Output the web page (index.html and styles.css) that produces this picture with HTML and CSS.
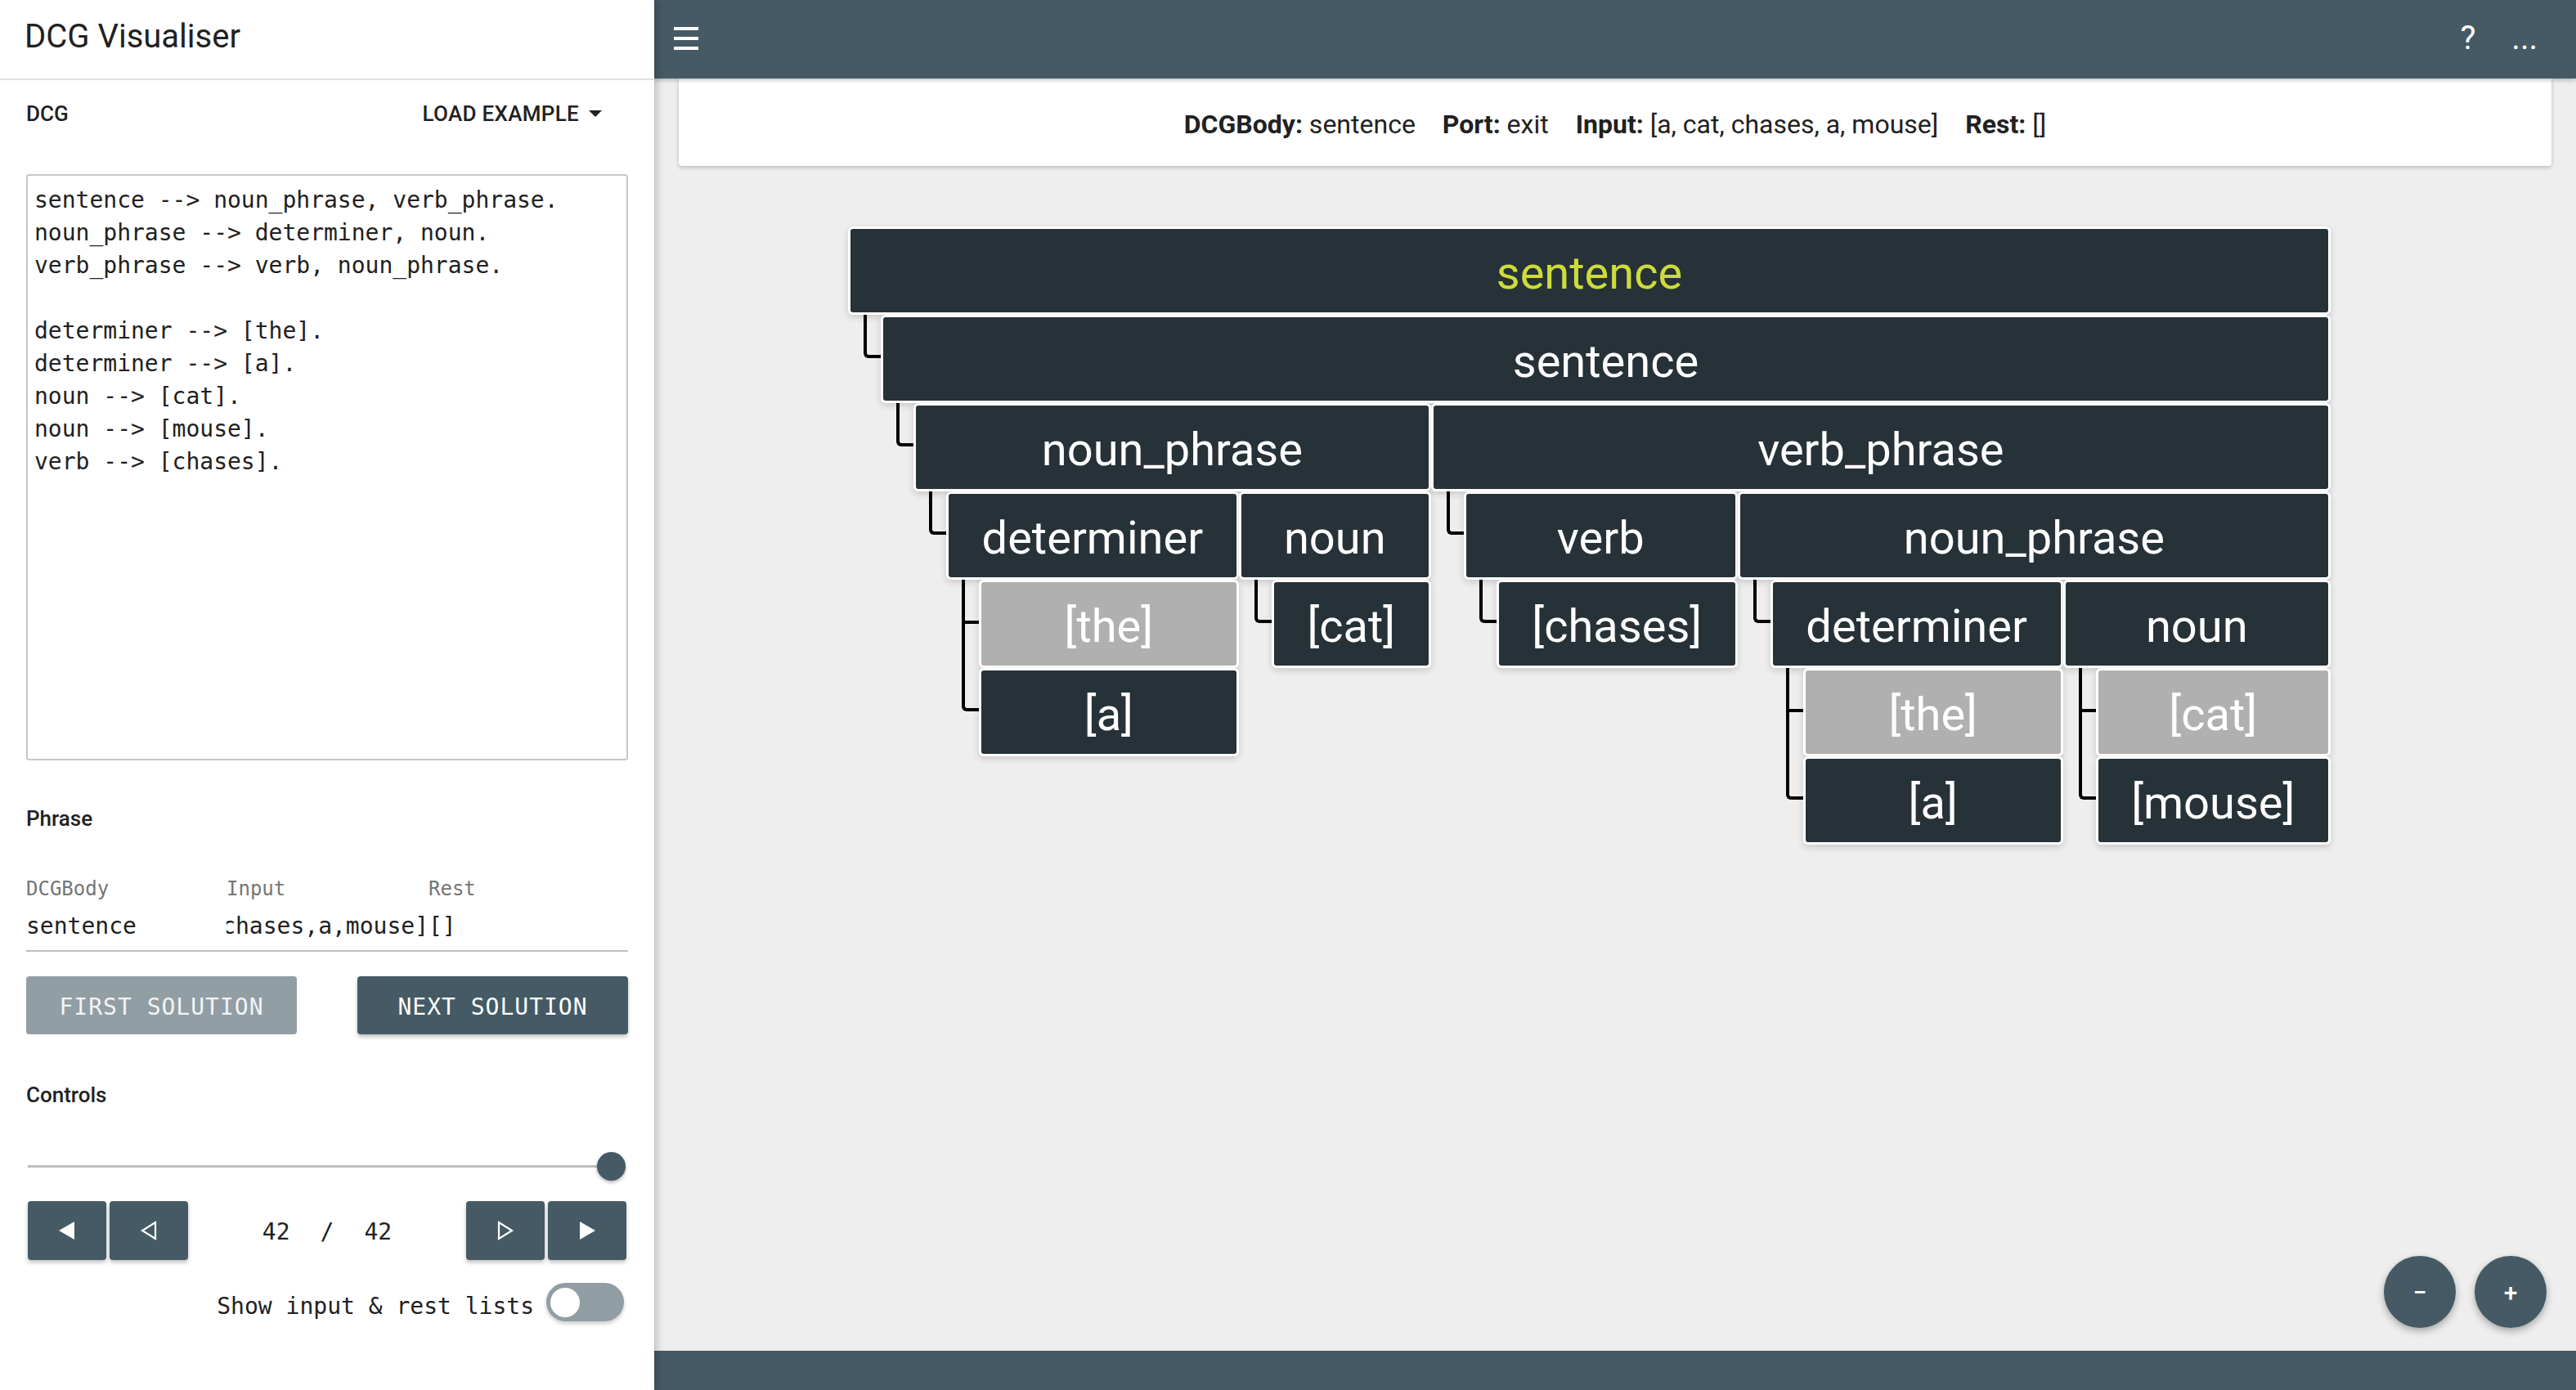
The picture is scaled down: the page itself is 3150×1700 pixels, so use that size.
FILE: index.html
```html
<!DOCTYPE html>
<html lang="en">
<head>
<meta charset="utf-8">
<title>DCG Visualiser</title>
<link rel="stylesheet" href="styles.css">
</head>
<body>
<div class="app">
  <aside class="sidebar">
    <div class="brand">DCG Visualiser</div>
    <div class="panel">
      <div class="sec-head">
        <span class="sec-title">DCG</span>
        <span class="load">LOAD EXAMPLE<svg class="caret" width="16" height="8" viewBox="0 0 16 8"><polygon points="0,0 16,0 8,8" fill="#212121"/></svg></span>
      </div>
      <div class="editor">sentence --&gt; noun_phrase, verb_phrase.
noun_phrase --&gt; determiner, noun.
verb_phrase --&gt; verb, noun_phrase.

determiner --&gt; [the].
determiner --&gt; [a].
noun --&gt; [cat].
noun --&gt; [mouse].
verb --&gt; [chases].</div>
      <div class="sec-title phrase-title">Phrase</div>
      <div class="ptable">
        <div class="prow phead"><span class="c1">DCGBody</span><span class="c2">Input</span><span class="c3">Rest</span></div>
        <div class="prow pvals"><span class="c1">sentence</span><span class="c2 clip"><span>[a,cat,chases,a,mouse]</span></span><span class="c3">[]</span></div>
      </div>
      <div class="sol-row">
        <button class="btn btn-off">FIRST SOLUTION</button>
        <button class="btn">NEXT SOLUTION</button>
      </div>
      <div class="sec-title controls-title">Controls</div>
      <div class="slider"><div class="track"></div><div class="thumb"></div></div>
      <div class="nav">
        <div class="nav-group">
          <button class="nbtn"><svg width="22" height="24" viewBox="0 0 22 24"><polygon points="20,1 20,23 1,12" fill="#fff"/></svg></button>
          <button class="nbtn"><svg width="22" height="24" viewBox="0 0 22 24"><polygon points="19,2 19,22 3,12" fill="none" stroke="#fff" stroke-width="2.2" stroke-linejoin="miter"/></svg></button>
        </div>
        <div class="counter"><span>42</span><span>/</span><span>42</span></div>
        <div class="nav-group">
          <button class="nbtn"><svg width="22" height="24" viewBox="0 0 22 24"><polygon points="3,2 3,22 19,12" fill="none" stroke="#fff" stroke-width="2.2" stroke-linejoin="miter"/></svg></button>
          <button class="nbtn"><svg width="22" height="24" viewBox="0 0 22 24"><polygon points="2,1 2,23 21,12" fill="#fff"/></svg></button>
        </div>
      </div>
      <div class="toggle-row">
        <span class="toggle-label">Show input &amp; rest lists</span>
        <span class="toggle"><span class="knob"></span></span>
      </div>
    </div>
  </aside>

  <main class="main">
    <header class="topbar">
      <svg class="menu" width="30" height="28" viewBox="0 0 30 28"><rect x="0" y="0" width="30" height="4" fill="#fff"/><rect x="0" y="12" width="30" height="4" fill="#fff"/><rect x="0" y="24" width="30" height="4" fill="#fff"/></svg>
      <span class="spacer"></span>
      <span class="top-icon">?</span>
      <span class="top-icon dots">...</span>
    </header>
    <section class="content">
      <div class="info-card">
        <span><b>DCGBody:</b> sentence</span>
        <span><b>Port:</b> exit</span>
        <span><b>Input:</b> [a, cat, chases, a, mouse]</span>
        <span><b>Rest:</b> []</span>
      </div>

      <div class="tree">
        <div class="node">
          <div class="box root">sentence</div>
          <div class="kids">
            <div class="node">
              <div class="box">sentence</div>
              <div class="kids">
                <div class="node">
                  <div class="box">noun_phrase</div>
                  <div class="kids">
                    <div class="node">
                      <div class="box">determiner</div>
                      <div class="kids alt">
                        <div class="node"><div class="box fail">[the]</div></div>
                        <div class="node"><div class="box">[a]</div></div>
                      </div>
                    </div>
                    <div class="node">
                      <div class="box">noun</div>
                      <div class="kids">
                        <div class="node"><div class="box">[cat]</div></div>
                      </div>
                    </div>
                  </div>
                </div>
                <div class="node">
                  <div class="box">verb_phrase</div>
                  <div class="kids">
                    <div class="node">
                      <div class="box">verb</div>
                      <div class="kids">
                        <div class="node"><div class="box">[chases]</div></div>
                      </div>
                    </div>
                    <div class="node">
                      <div class="box">noun_phrase</div>
                      <div class="kids">
                        <div class="node">
                          <div class="box">determiner</div>
                          <div class="kids alt">
                            <div class="node"><div class="box fail">[the]</div></div>
                            <div class="node"><div class="box">[a]</div></div>
                          </div>
                        </div>
                        <div class="node">
                          <div class="box">noun</div>
                          <div class="kids alt">
                            <div class="node"><div class="box fail">[cat]</div></div>
                            <div class="node"><div class="box">[mouse]</div></div>
                          </div>
                        </div>
                      </div>
                    </div>
                  </div>
                </div>
              </div>
            </div>
          </div>
        </div>
      </div>

      <div class="fabs">
        <button class="fab">−</button>
        <button class="fab">+</button>
      </div>
    </section>
    <footer class="bottombar"></footer>
  </main>
</div>
</body>
</html>
```

FILE: styles.css
```css
html, body {
  margin: 0;
  padding: 0;
  width: 3150px;
  height: 1700px;
  overflow: hidden;
  font-family: Roboto, "Liberation Sans", sans-serif;
  color: #212121;
}

.app {
  display: flex;
  width: 3150px;
  height: 1700px;
}

/* ---------- sidebar ---------- */
.sidebar {
  width: 800px;
  flex: 0 0 800px;
  height: 1700px;
  background: #fff;
  box-shadow: 2px 0 10px rgba(0, 0, 0, 0.25);
  position: relative;
  z-index: 3;
}

.brand {
  height: 96px;
  line-height: 90px;
  padding-left: 30px;
  font-size: 40px;
  font-weight: 400;
  border-bottom: 2px solid #e0e0e0;
}

.panel {
  padding: 0 32px;
}

.sec-head {
  margin-top: 23px;
  height: 36px;
  display: flex;
  align-items: center;
  justify-content: space-between;
}

.sec-title {
  font-size: 26px;
  line-height: 36px;
  font-weight: 500;
  display: block;
}

.load {
  font-size: 26px;
  line-height: 36px;
  font-weight: 500;
  display: flex;
  align-items: center;
  margin-right: 32px;
  letter-spacing: 0.3px;
}

.caret {
  margin-left: 12px;
}

.editor {
  margin-top: 56px;
  height: 717px;
  box-sizing: border-box;
  border: 2px solid #c6c6c6;
  border-radius: 4px;
  padding: 10px 8px 8px 8px;
  font-family: "DejaVu Sans Mono", "Liberation Mono", monospace;
  font-size: 28px;
  line-height: 40px;
  white-space: pre;
  color: #212121;
  overflow: hidden;
}

.phrase-title {
  margin-top: 53px;
}

.ptable {
  margin-top: 52px;
  border-bottom: 2px solid #bdbdbd;
  padding-bottom: 9px;
  font-family: "DejaVu Sans Mono", "Liberation Mono", monospace;
}

.prow {
  display: flex;
  white-space: nowrap;
}

.phead {
  font-size: 24px;
  line-height: 32px;
  color: #757575;
}

.pvals {
  margin-top: 10px;
  font-size: 28px;
  line-height: 40px;
  color: #212121;
}

.c1 {
  width: 245px;
  flex: 0 0 245px;
}

.c2 {
  width: 247px;
  flex: 0 0 247px;
}

.clip {
  display: flex;
  justify-content: flex-end;
  overflow: hidden;
}

.clip > span {
  flex: 0 0 auto;
}

.c3 {
  flex: 1;
}

.sol-row {
  margin-top: 30px;
  display: flex;
  justify-content: space-between;
}

.btn {
  width: 331px;
  height: 71px;
  border: none;
  border-radius: 4px;
  background: #455a64;
  color: #fff;
  font-family: "DejaVu Sans Mono", "Liberation Mono", monospace;
  font-size: 28px;
  letter-spacing: 1px;
  padding: 3px 0 0 0;
  box-shadow: 0 3px 5px rgba(0, 0, 0, 0.25);
}

.btn-off {
  background: #919ea4;
  color: #f2f4f5;
  box-shadow: none;
}

.controls-title {
  margin-top: 56px;
}

.slider {
  margin-top: 51px;
  height: 36px;
  display: flex;
  align-items: center;
  padding: 0 3px 0 2px;
}

.track {
  flex: 1;
  height: 3px;
  background: #bdbdbd;
  margin-right: -18px;
}

.thumb {
  width: 35px;
  height: 35px;
  border-radius: 50%;
  background: #455a64;
  box-shadow: 0 2px 4px rgba(0, 0, 0, 0.3);
  position: relative;
}

.nav {
  margin: 25px 2px 0 2px;
  height: 72px;
  display: flex;
  align-items: center;
  justify-content: space-between;
}

.nav-group {
  display: flex;
  gap: 4px;
}

.nbtn {
  width: 96px;
  height: 72px;
  border: none;
  border-radius: 4px;
  background: #455a64;
  padding: 0;
  display: flex;
  align-items: center;
  justify-content: center;
  box-shadow: 0 3px 5px rgba(0, 0, 0, 0.25);
}

.counter {
  display: flex;
  gap: 37px;
  font-family: "DejaVu Sans Mono", "Liberation Mono", monospace;
  font-size: 28px;
  line-height: 40px;
  color: #212121;
  padding-top: 3px;
}

.toggle-row {
  margin-top: 28px;
  height: 47px;
  display: flex;
  justify-content: flex-end;
  align-items: flex-start;
  gap: 15px;
  padding-right: 5px;
}

.toggle-label {
  margin-top: 9px;
  font-family: "DejaVu Sans Mono", "Liberation Mono", monospace;
  font-size: 28px;
  line-height: 40px;
  color: #212121;
  white-space: nowrap;
}

.toggle {
  width: 95px;
  height: 47px;
  border-radius: 24px;
  background: #919ea4;
  display: flex;
  align-items: center;
  padding-left: 5px;
  box-sizing: border-box;
  box-shadow: 0 3px 5px rgba(0, 0, 0, 0.2);
}

.knob {
  width: 36px;
  height: 36px;
  border-radius: 50%;
  background: #fff;
}

/* ---------- main ---------- */
.main {
  flex: 1;
  height: 1700px;
  display: flex;
  flex-direction: column;
  background: #eeeeee;
}

.topbar {
  height: 96px;
  flex: 0 0 96px;
  background: #455a64;
  display: flex;
  align-items: center;
  padding: 0 47px 0 24px;
  color: #fff;
  box-shadow: 0 2px 5px rgba(0, 0, 0, 0.25);
  position: relative;
  z-index: 2;
}

.menu {
  margin-top: -2px;
}

.spacer {
  flex: 1;
}

.top-icon {
  font-size: 40px;
  line-height: 48px;
  margin-top: -2px;
}

.dots {
  margin-left: 44px;
}

.content {
  flex: 1;
  position: relative;
  padding: 0 30px;
  overflow: hidden;
}

.info-card {
  height: 107px;
  box-sizing: border-box;
  padding-top: 4px;
  background: #fff;
  border-radius: 0 0 4px 4px;
  box-shadow: 0 2px 5px rgba(0, 0, 0, 0.22);
  display: flex;
  align-items: center;
  justify-content: center;
  gap: 33px;
  font-size: 32px;
  white-space: nowrap;
}

.info-card b {
  font-weight: 700;
}

/* ---------- tree ---------- */
.tree {
  margin-top: 74px;
  margin-left: 207px;
  display: inline-flex;
}

.node {
  display: flex;
  flex-direction: column;
  flex: 1 1 auto;
}

.box {
  height: 108px;
  box-sizing: border-box;
  border: 3px solid #fff;
  border-radius: 6px;
  background: #263238;
  color: #fff;
  font-size: 56px;
  display: flex;
  align-items: center;
  justify-content: center;
  padding: 6px 40.6px 0 40.6px;
  white-space: nowrap;
  box-shadow: 0 3px 9px rgba(0, 0, 0, 0.16);
}

.box.root {
  color: #cddc39;
}

.box.fail {
  background: #b0b0b0;
}

.kids {
  display: flex;
  padding-left: 40px;
  position: relative;
}

.kids::before {
  content: "";
  position: absolute;
  left: 19px;
  top: 0;
  width: 21px;
  height: 53px;
  box-sizing: border-box;
  border-left: 4px solid #000;
  border-bottom: 4px solid #000;
  border-bottom-left-radius: 6px;
}

.kids.alt {
  flex-direction: column;
}

.kids.alt::before {
  height: auto;
  bottom: 55px;
}

.kids.alt > .node {
  position: relative;
}

.kids.alt > .node:not(:last-child)::before {
  content: "";
  position: absolute;
  left: -21px;
  top: 50px;
  width: 21px;
  height: 4px;
  background: #000;
}

/* ---------- zoom buttons ---------- */
.fabs {
  position: absolute;
  right: 36px;
  bottom: 28px;
  display: flex;
  gap: 23px;
}

.fab {
  width: 88px;
  height: 88px;
  border-radius: 50%;
  border: none;
  background: #455a64;
  color: #fff;
  font-family: Roboto, "Liberation Sans", sans-serif;
  font-size: 30px;
  font-weight: 500;
  padding: 0;
  box-shadow: 0 4px 10px rgba(0, 0, 0, 0.3);
}

.bottombar {
  height: 48px;
  flex: 0 0 48px;
  background: #455a64;
}
```
